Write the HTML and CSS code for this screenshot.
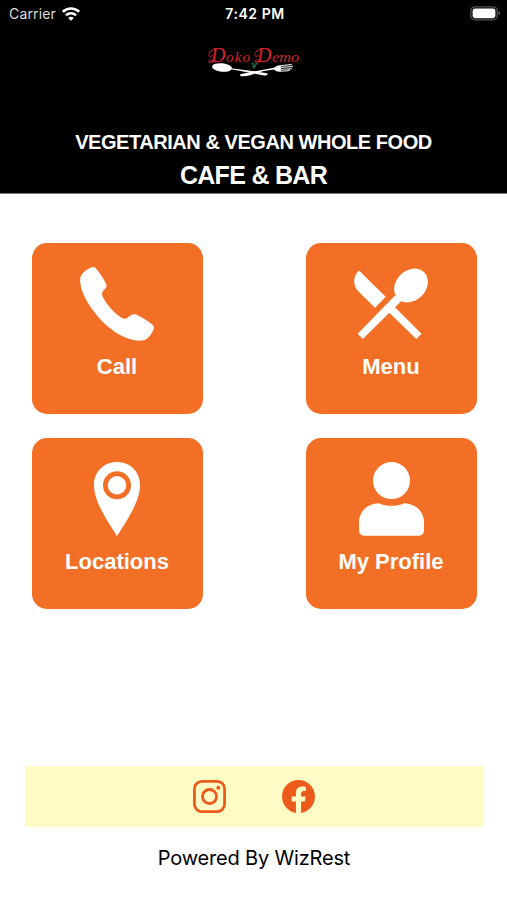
FILE: index.html
```html
<!DOCTYPE html>
<html lang="en">
<head>
  <meta charset="UTF-8">
  <meta name="viewport" content="width=device-width, initial-scale=1">
  <title>Doko Demo</title>
  <link rel="stylesheet" href="styles.css">
</head>

<body>

  <header class="header">
    <div class="status">
      <div class="carrier">
        <span>Carrier</span>
        <svg width="18" height="14" viewBox="0 0 18 14" fill="none" stroke="#fff" stroke-width="2.6">
          <path d="M.9 4.800a11.600 11.600 0 0 1 16.200 0"/>
          <path d="M4 8.300a7.200 7.200 0 0 1 10 0"/>
          <path d="M9 13.800L6.200 11a4 4 0 0 1 5.600 0z" fill="#fff" stroke="none"/>
        </svg>
      </div>
      <span class="time">7:42 PM</span>
      <svg class="battery" width="31" height="15" viewBox="0 0 31 15">
        <rect x=".8" y=".8" width="26.400" height="13" rx="4" fill="none" stroke="#555" stroke-width="1.300"/>
        <rect x="2.600" y="2.400" width="22.800" height="9.800" rx="2.400" fill="#fff"/>
        <path d="M28.600 5.200c2 .7 2 3.500 0 4.200z" fill="#666"/>
      </svg>
    </div>

    <svg class="logo" width="94" height="34" viewBox="0 0 94 34">
      <g class="logo-text">
        <text x="4" y="17" font-size="20">D</text>
        <text x="19" y="17" font-size="15" textLength="24" lengthAdjust="spacing">oko</text>
        <text x="50" y="17" font-size="20">D</text>
        <text x="65" y="17" font-size="15" textLength="27" lengthAdjust="spacingAndGlyphs">emo</text>
      </g>
      <g fill="none" stroke="#d5232b" stroke-width=".9">
        <path d="M9 4Q3 5 2 9t4 1.500M8 16.500q-5-3-6-.5t6 .5"/>
        <path d="M55 4Q49 5 48 9t4 1.500M54 16.500q-5-3-6-.5t6 .5"/>
      </g>
      <path d="M45 18q2 1 1.500 5M50 18q-2 2-3 5" stroke="#0b7a48" stroke-width="1.400" fill="none"/>
      <ellipse cx="15" cy="22.500" rx="10" ry="4.200" transform="rotate(6 15 22.500)" fill="#fff"/>
      <path d="M24 23.200L45 26L60 28.300q2 2.200-3 2.200L43 27.800L24 24.200z" fill="#fff"/>
      <path d="M33 29.200q12-2.500 34-6.400q3-2.800 7-2.800v6.800q-5 .4-7-2.200Q55 25.400 44 30q-7 2-10.500 1z" fill="#fff"/>
      <path d="M73 20.800l12-1.500M73 22.700l13-1.300M73 24.500l12-.9M73 26.100q6 .2 10-1" stroke="#ccc" stroke-width="1.200" fill="none"/>
    </svg>

    <h1 class="tagline">VEGETARIAN &amp; VEGAN WHOLE FOOD</h1>
    <h2 class="subtitle">CAFE &amp; BAR</h2>
  </header>

  <main class="tiles">
    <a class="tile">
      <svg width="74" height="74" viewBox="0 0 74 74" fill="#fff">
        <path d="M10.500.8C13-.4 14.800 0 16 1.600C20 6.500 24 12 26.500 18C27 20 25.500 21.500 23.500 23.500C22 25 21.600 27 22.500 29.500C27 38 35 47 42 51C45 52.600 47 51.500 49 49.500C51.500 47.200 53.500 46.800 56 47.500C62 50 68 54 72.800 58C74.200 59.500 74.200 61 73.300 63C70.500 69 67 72.500 64 73.300C56 75 48 72 40 68C22 58 6 37 1.200 21C0 16-.3 12 .8 9C3 5 6.500 2.500 10.500.8z"/>
      </svg>
      <span>Call</span>
    </a>
    <a class="tile">
      <svg width="74" height="74" viewBox="0 -1.500 74 74" fill="#fff">
        <path d="M5 2L31.700 28.300L21 39.300L4 22.500C-1 17-1.500 8 5 2z"/>
        <path d="M41 27L3.700 65.300L8.900 70.500L35.300 44.200L62.300 70.500L67.500 65.300L41 38.700L48 32z"/>
        <ellipse cx="57" cy="17" rx="18.600" ry="15" transform="rotate(-45 57 17)"/>
      </svg>
      <span>Menu</span>
    </a>
    <a class="tile">
      <svg width="46" height="74" viewBox="0 0 46 74" fill="#fff">
        <path fill-rule="evenodd" d="M23 0C36 0 46 9.500 46 23C46 39 34 57 23 74C12 57 0 39 0 23C0 9.500 10 0 23 0zM23 9.300a14 14 0 1 0 0 28a14 14 0 1 0 0-28z"/>
        <circle cx="23" cy="23.300" r="9.200"/>
      </svg>
      <span>Locations</span>
    </a>
    <a class="tile">
      <svg width="65" height="74" viewBox="0 0 65 74" fill="#fff">
        <circle cx="32.500" cy="18.600" r="18.500"/>
        <path d="M20 41.200C27 44.700 38 44.700 45 41.200C57 41.500 65 50 65 60V68Q65 73.800 59 73.800H6Q0 73.800 0 68V60C0 50 8 41.500 20 41.200z"/>
      </svg>
      <span>My Profile</span>
    </a>
  </main>

  <footer class="footer">
    <div class="social">
      <svg width="33" height="33" viewBox="0 0 33 33" fill="none" stroke="#ec5a1c" stroke-width="2.800">
        <rect x="1.400" y="1.400" width="30.200" height="30.200" rx="7.500"/>
        <circle cx="16.500" cy="16.500" r="7"/>
        <circle cx="25.300" cy="7.800" r="2" fill="#ec5a1c" stroke="none"/>
      </svg>
      <svg width="33" height="33" viewBox="0 0 24 24">
        <path fill="#ec5a1c" d="M24 12.070C24 5.410 18.630 0 12 0S0 5.410 0 12.070C0 18.100 4.390 23.090 10.130 24v-8.440H7.080v-3.490h3.050V9.410c0-3.020 1.790-4.690 4.530-4.690 1.310 0 2.680.24 2.680.24v2.970h-1.510c-1.490 0-1.960.93-1.960 1.890v2.260h3.330l-.53 3.490h-2.800V24C19.610 23.090 24 18.100 24 12.070z"/>
      </svg>
    </div>
    <p class="powered">Powered By WizRest</p>
  </footer>

</body>
</html>
```

FILE: styles.css
```css
* {
  margin: 0;
  padding: 0;
  box-sizing: border-box;
}

body {
  width: 507px;
  height: 900px;
  display: flex;
  flex-direction: column;
  background: #fff;
  font-family: 'Liberation Sans', Arial, sans-serif;
  overflow: hidden;
}

.header {
  height: 194px;
  background: #000;
  color: #fff;
  display: flex;
  flex-direction: column;
  align-items: center;
  border-bottom: 1px solid #777;
}

.status {
  width: 100%;
  height: 27px;
  padding: 0 6px 0 9px;
  display: grid;
  grid-template-columns: 1fr auto 1fr;
  align-items: center;
  font-family: Inter, sans-serif;
  font-size: 14px;
}

.carrier {
  display: flex;
  align-items: center;
  gap: 6px;
  color: #ddd;
  letter-spacing: 0.15px;
}

.time {
  font-weight: 600;
  letter-spacing: 0.55px;
}

.battery {
  justify-self: end;
}

.logo {
  margin-top: 18px;
}

.logo-text {
  fill: #d5232b;
  font-family: 'Liberation Serif', serif;
  font-style: italic;
}

.tagline {
  margin-top: 51px;
  font-size: 20px;
  line-height: 24px;
  letter-spacing: -0.45px;
}

.subtitle {
  margin-top: 6px;
  font-size: 25px;
  line-height: 30px;
  letter-spacing: -0.7px;
}

.tiles {
  padding: 48.5px 30.5px 0 31.5px;
  display: grid;
  grid-template-columns: 171px 171px;
  justify-content: space-between;
  row-gap: 24.5px;
}

.tile {
  height: 171px;
  padding-top: 24px;
  background: #f36f26;
  border-radius: 15px;
  color: #fff;
  display: flex;
  flex-direction: column;
  align-items: center;
  gap: 13px;
  font-size: 22px;
  font-weight: bold;
  line-height: 26px;
}

.footer {
  margin-top: auto;
  padding: 0 24px 29px 25px;
}

.social {
  height: 61px;
  background: #fffcc5;
  display: flex;
  align-items: center;
  justify-content: center;
  gap: 56px;
}

.powered {
  margin-top: 18px;
  font-family: Inter, sans-serif;
  font-size: 20px;
  line-height: 26px;
  letter-spacing: -0.18px;
  text-align: center;
}
```
